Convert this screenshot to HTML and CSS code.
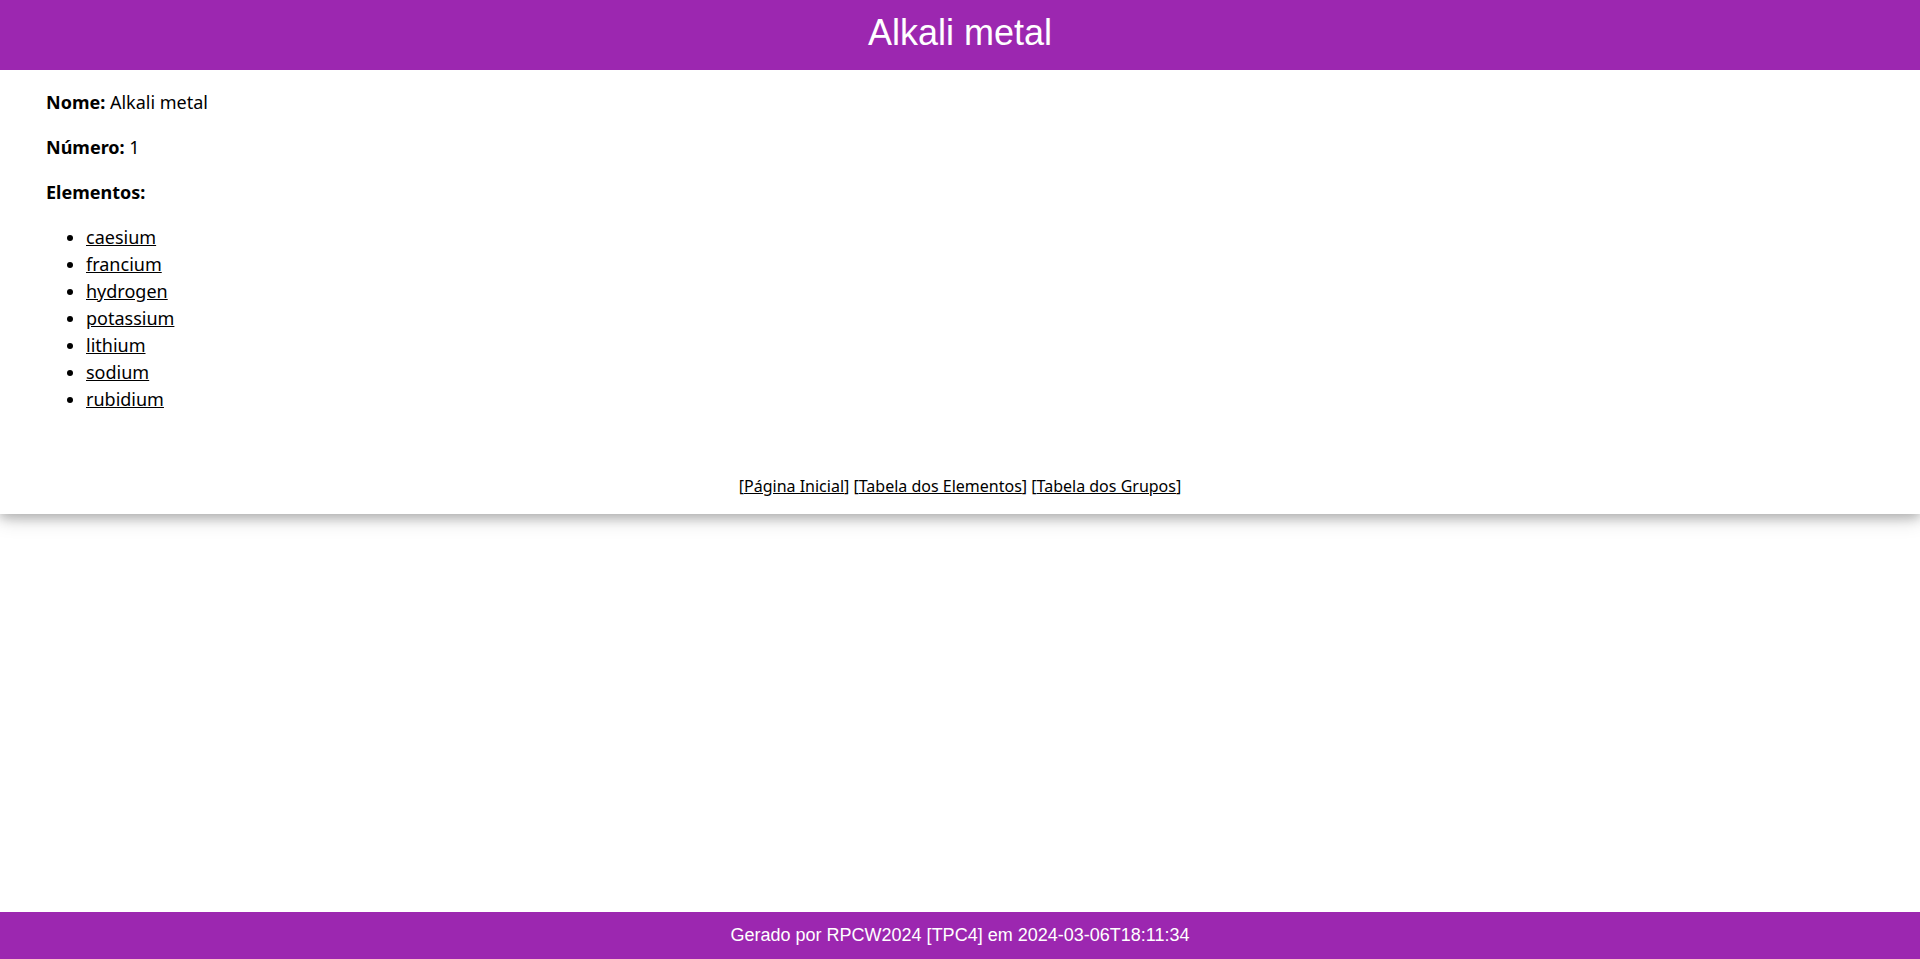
FILE: index.html
```html
<!DOCTYPE html>
<html lang="pt">
<head>
<meta charset="utf-8">
<title>Alkali metal</title>
<link rel="stylesheet" href="styles.css">
</head>
<body>
<div class="page">
  <div class="card">
    <header class="top">
      <h1 class="title">Alkali metal</h1>
    </header>
    <div class="content">
      <p class="field"><b>Nome:</b> Alkali metal</p>
      <p class="field"><b>Número:</b> 1</p>
      <p class="field"><b>Elementos:</b></p>
      <ul class="elements">
        <li><a href="#">caesium</a></li>
        <li><a href="#">francium</a></li>
        <li><a href="#">hydrogen</a></li>
        <li><a href="#">potassium</a></li>
        <li><a href="#">lithium</a></li>
        <li><a href="#">sodium</a></li>
        <li><a href="#">rubidium</a></li>
      </ul>
      <p class="nav">[<a href="#">Página Inicial</a>] [<a href="#">Tabela dos Elementos</a>] [<a href="#">Tabela dos Grupos</a>]</p>
    </div>
  </div>
  <footer class="bottom">
    <h5 class="gen">Gerado por RPCW2024 [TPC4] em 2024-03-06T18:11:34</h5>
  </footer>
</div>
</body>
</html>
```
FILE: styles.css
```css
html, body {
  margin: 0;
  padding: 0;
  height: 100%;
}
body {
  font-family: "Noto Sans", "Open Sans", sans-serif;
  color: #000;
  background: #fff;
}
.page {
  min-height: 100vh;
  display: flex;
  flex-direction: column;
}
.card {
  box-shadow: 0 4px 10px 0 rgba(0,0,0,0.2), 0 4px 20px 0 rgba(0,0,0,0.19);
  background: #fff;
}
.top {
  background: #9c27b0;
  color: #fff;
  height: 70px;
  box-sizing: border-box;
  padding-top: 6px;
  text-align: center;
}
.title {
  margin: 0;
  font-family: "Liberation Sans", Arial, sans-serif;
  font-weight: 400;
  font-size: 36px;
  line-height: 54px;
}
.content {
  display: flow-root;
  padding: 1px 46px 0;
  font-size: 18px;
  line-height: 27px;
}
.field {
  margin: 18px 0;
}
.elements {
  margin: 18px 0;
  padding-left: 40px;
}
.content a {
  color: #000;
}
.nav {
  margin: 61px 0 16px;
  text-align: center;
  font-size: 16px;
  line-height: 24px;
}
.bottom {
  margin-top: auto;
  background: #9c27b0;
  color: #fff;
  text-align: center;
  padding: 0 16px;
}
.gen {
  margin: 10px 0;
  font-family: "Liberation Sans", Arial, sans-serif;
  font-weight: 400;
  font-size: 18px;
  line-height: 27px;
}
```
